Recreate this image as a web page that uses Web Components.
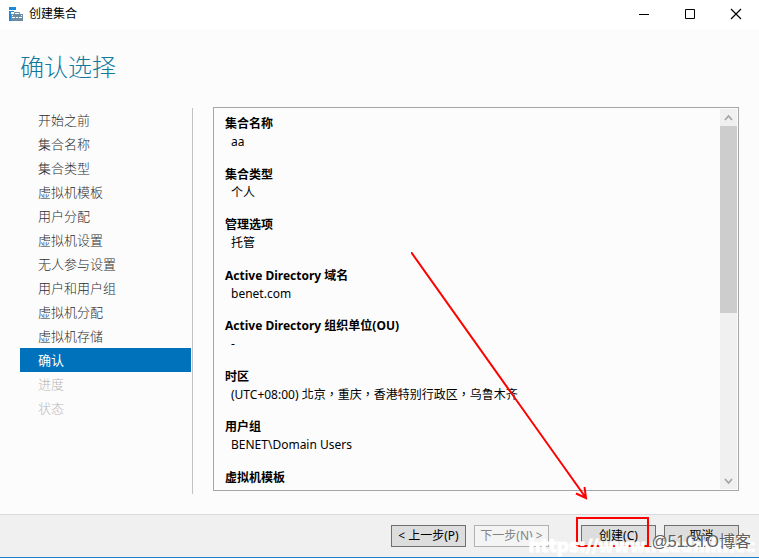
<!DOCTYPE html>
<html lang="zh-CN">
<head>
<meta charset="utf-8">
<title>创建集合</title>
<style>
  body {
    margin: 0;
    font-family: "Noto Sans", "Noto Sans CJK SC", sans-serif;
    font-size: 12px;
    color: #000000;
  }

  /* Centred full-width commas */
  .timezone {
    font-family: "Noto Sans", "Noto Sans CJK TC", sans-serif;
  }
</style>
</head>
<body>
<wizard-window>
  <window-bar slot="bar">创建集合</window-bar>
  <step-list slot="steps" active="10">
    <span>开始之前</span>
    <span>集合名称</span>
    <span>集合类型</span>
    <span>虚拟机模板</span>
    <span>用户分配</span>
    <span>虚拟机设置</span>
    <span>无人参与设置</span>
    <span>用户和用户组</span>
    <span>虚拟机分配</span>
    <span>虚拟机存储</span>
    <span>确认</span>
    <span>进度</span>
    <span>状态</span>
  </step-list>
  <scroll-pane slot="content">
    <summary-item label="集合名称">aa</summary-item>
    <summary-item label="集合类型">个人</summary-item>
    <summary-item label="管理选项">托管</summary-item>
    <summary-item label="Active Directory 域名">benet.com</summary-item>
    <summary-item label="Active Directory 组织单位(OU)">-</summary-item>
    <summary-item label="时区"><span class="timezone" lang="zh-TW">(UTC+08:00) 北京，重庆，香港特别行政区，乌鲁木齐</span></summary-item>
    <summary-item label="用户组">BENET\Domain Users</summary-item>
    <summary-item label="虚拟机模板"></summary-item>
  </scroll-pane>
  <wizard-footer slot="footer"></wizard-footer>
</wizard-window>
<arrow-mark></arrow-mark>

<script>
(() => {
  // Base class: clones the template html into an open shadow root
  class BaseElement extends HTMLElement {
    constructor() {
      super();
      const template = document.createElement('template');
      template.innerHTML = this.constructor.html;
      this.attachShadow({ mode: 'open' });
      this.shadowRoot.appendChild(template.content.cloneNode(true));
    }
  }

  class WizardWindow extends BaseElement {}
  WizardWindow.html = `
  <style>
    :host {
      background: #fcfcfc;
      display: flex;
      flex-direction: column;
      min-height: 100vh;
      overflow: hidden;
    }

    h1 {
      color: #107a9c;
      font-size: 24px;
      font-weight: 300;
      line-height: 36px;
      margin: 20px 20px 22px;
    }

    main {
      display: flex;
      flex: 1;
      gap: 20px;
      margin: 0 20px 20px;
    }
  </style>

  <slot name="bar"></slot>
  <h1>确认选择</h1>
  <main>
    <slot name="steps"></slot>
    <slot name="content"></slot>
  </main>
  <slot name="footer"></slot>
`;

  class WindowBar extends BaseElement {}
  WindowBar.html = `
  <style>
    :host {
      align-items: center;
      background: #ffffff;
      display: flex;
      height: 29px;
      padding-left: 8px;
    }

    .icon {
      margin-bottom: 2px;
    }

    .title {
      flex: 1;
      line-height: 18px;
      padding: 0 0 2px 5px;
    }

    button {
      align-items: center;
      background: none;
      border: 0;
      display: flex;
      height: 27px;
      justify-content: center;
      margin-bottom: 2px;
      padding: 0;
      width: 46px;
    }
  </style>

  <svg class="icon" width="16" height="16" viewBox="0 0 16 16" aria-hidden="true">
    <path fill="#1e88d8" d="M1 1h7v3H1zM1 5h5v1H3v9H1z"/>
    <path fill="#6d8ba3" d="M3 8h12v7H3z"/>
    <path fill="none" stroke="#6d8ba3" d="M6.500 8.500V6.500h5v2"/>
    <path fill="none" stroke="#ffffff" d="M4 9.500h10M4 11.500h3M8 11.500h2M11 11.500h3"/>
    <path fill="#6d8ba3" d="M5 9h8v1H5z"/>
  </svg>
  <span class="title"><slot></slot></span>
  <button type="button" aria-label="最小化">
    <svg width="12" height="12"><path d="M1 6.500h10" stroke="#000"/></svg>
  </button>
  <button type="button" aria-label="最大化">
    <svg width="12" height="12"><path d="M1.500 1.500h9v9h-9z" fill="none" stroke="#000"/></svg>
  </button>
  <button type="button" aria-label="关闭">
    <svg width="12" height="12"><path d="M1 1l10 10M11 1L1 11" stroke="#000" stroke-width="1.200"/></svg>
  </button>
`;

  class StepList extends BaseElement {
    // Marks the current step and greys out those after it
    connectedCallback() {
      const active = Number(this.getAttribute('active'));

      [...this.children].forEach((step, index) => {
        if (index === active) {
          step.className = 'active';
          step.setAttribute('aria-current', 'step');
        } else if (index > active) {
          step.className = 'disabled';
        }
      });
    }
  }
  StepList.html = `
  <style>
    :host {
      border-right: 1px solid #c3c3c3;
      box-sizing: border-box;
      display: flex;
      flex: none;
      flex-direction: column;
      margin-top: 1px;
      padding-right: 1px;
      width: 173px;
    }

    ::slotted(span) {
      color: #2c2c2c;
      font-size: 13px;
      font-weight: 300;
      line-height: 24px;
      padding-left: 18px;
    }

    ::slotted(.active) {
      background: #0072bc;
      color: #ffffff;
      font-weight: 400;
    }

    ::slotted(.disabled) {
      color: #b8b8b8;
    }
  </style>

  <slot></slot>
`;

  class ScrollPane extends BaseElement {}
  ScrollPane.html = `
  <style>
    :host {
      border: 1px solid #a6a6ab;
      box-sizing: border-box;
      display: flex;
      flex: 1;
      margin-bottom: 3px;
      padding: 1px;
    }

    .content {
      flex: 1;
      height: 364px;
      overflow: hidden;
      padding: 6px 10px 10px;
    }

    ::slotted(summary-item) {
      margin-bottom: 15px;
    }

    ::slotted(summary-item:nth-child(even)) {
      margin-bottom: 14px;
    }

    .scrollbar {
      background: #f0f0f0;
      display: flex;
      flex-direction: column;
      width: 17px;
    }

    button {
      background: none;
      border: 0;
      display: flex;
      height: 17px;
      padding: 0;
    }

    .track {
      flex: 1;
    }

    .thumb {
      background: #cdcdcd;
      height: 54%;
    }
  </style>

  <div class="content"><slot></slot></div>
  <div class="scrollbar">
    <button type="button" aria-label="向上滚动">
      <svg width="17" height="17"><path d="M5 11l3.500-4L12 11" fill="none" stroke="#a3a3a3" stroke-width="1.700"/></svg>
    </button>
    <div class="track"><div class="thumb"></div></div>
    <button type="button" aria-label="向下滚动">
      <svg width="17" height="17"><path d="M5 7l3.500 4L12 7" fill="none" stroke="#a3a3a3" stroke-width="1.700"/></svg>
    </button>
  </div>
`;

  class SummaryItem extends BaseElement {
    connectedCallback() {
      this.shadowRoot.querySelector('.label').textContent = this.getAttribute('label');
    }
  }
  SummaryItem.html = `
  <style>
    :host {
      display: block;
      line-height: 18px;
    }

    .label {
      font-weight: 700;
    }

    .value {
      min-height: 18px;
      padding-left: 6px;
    }
  </style>

  <div class="label"></div>
  <div class="value"><slot></slot></div>
`;

  class WizardFooter extends BaseElement {}
  WizardFooter.html = `
  <style>
    :host {
      background: #f0f0f0;
      border-bottom: 1px solid #1e7fc8;
      border-top: 1px solid #dadada;
      display: flex;
      gap: 32px;
      justify-content: flex-end;
      margin-bottom: 1px;
      padding: 10px 20px;
      position: relative;
    }

    button {
      background: #dddddd;
      border: 1px solid #707070;
      color: #000000;
      font: inherit;
      height: 22px;
      line-height: 18px;
      padding: 0;
      white-space: nowrap;
      width: 75px;
    }

    button:disabled {
      background: #f4f4f4;
      border-color: #adb2b5;
      color: #838383;
    }

    .group {
      display: flex;
      gap: 8px;
    }

    /* Red frame round the create button */
    .frame {
      border: 2px solid #ff0000;
      box-sizing: border-box;
      height: 30px;
      position: absolute;
      right: 110px;
      top: 2px;
      width: 73px;
    }

    .url,
    .credit {
      line-height: 20px;
      pointer-events: none;
      position: absolute;
      white-space: nowrap;
    }

    .url {
      -webkit-text-stroke: 1px #ffffff;
      color: #ffffff;
      font-family: "DejaVu Sans", sans-serif;
      font-size: 17px;
      font-weight: 700;
      right: 4px;
      top: 21px;
    }

    .credit {
      color: #606060;
      font-family: "Liberation Sans", "Noto Sans CJK SC", sans-serif;
      font-size: 16px;
      right: 8px;
      text-shadow: 1px 1px #ffffff;
      top: 17px;
    }
  </style>

  <div class="group">
    <button type="button">&lt; 上一步(P)</button>
    <button type="button" disabled>下一步(N) &gt;</button>
  </div>
  <div class="group">
    <button type="button">创建(C)</button>
    <button type="button">取消</button>
  </div>
  <div class="frame"></div>
  <span class="url">https://www.rzadmin.cc</span>
  <span class="credit">@51CTO博客</span>
`;

  class ArrowMark extends BaseElement {}
  ArrowMark.html = `
  <style>
    :host {
      left: 411px;
      pointer-events: none;
      position: absolute;
      top: 252px;
    }

    svg {
      display: block;
    }
  </style>

  <svg width="180" height="250" fill="none" stroke="#ff0000" stroke-width="2" aria-hidden="true">
    <path d="M0 0L175 246M165 241.500L175 246L173.500 235"/>
  </svg>
`;

  customElements.define('wizard-window', WizardWindow);
  customElements.define('window-bar', WindowBar);
  customElements.define('step-list', StepList);
  customElements.define('scroll-pane', ScrollPane);
  customElements.define('summary-item', SummaryItem);
  customElements.define('wizard-footer', WizardFooter);
  customElements.define('arrow-mark', ArrowMark);
})();
</script>
</body>
</html>
